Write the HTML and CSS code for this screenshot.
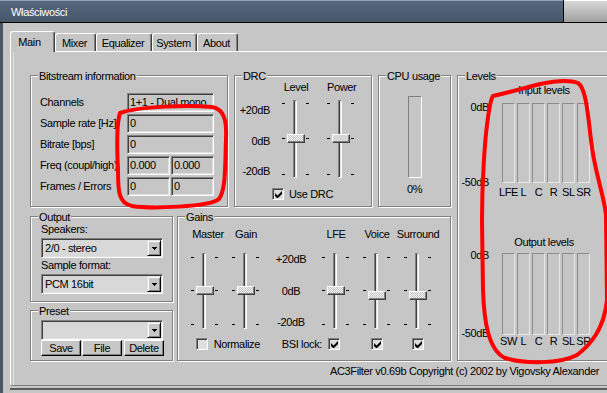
FILE: index.html
```html
<!DOCTYPE html>
<html lang="pl">

<head>
    <meta charset="utf-8">
    <link rel="stylesheet" href="styles.css">
</head>

<body>
    <div class="window">
        <div class="titlebar">
            <span class="title">Właściwości</span>
            <span class="title-side"></span>
        </div>

        <div class="client">
            <!-- Tabs -->
            <div class="tabs">
                <div class="tab tab-active" style="width:45px">Main</div>
                <div class="tab" style="width:41px">Mixer</div>
                <div class="tab" style="width:56px">Equalizer</div>
                <div class="tab" style="width:45px">System</div>
                <div class="tab" style="width:41px">About</div>
            </div>

            <div class="panel">
                <div class="panel-body">
                    <div class="left-col">
                        <div class="row-top">
                            <!-- Bitstream information -->
                            <div class="group bitstream">
                                <span class="group-title">Bitstream information</span>
                                <div class="info-grid">
                                    <span class="info-label">Channels</span>
                                    <div class="field">1+1 - Dual mono</div>
                                    <span class="info-label">Sample rate [Hz]</span>
                                    <div class="field">0</div>
                                    <span class="info-label">Bitrate [bps]</span>
                                    <div class="field">0</div>
                                    <span class="info-label">Freq (coupl/high)</span>
                                    <div class="field-pair">
                                        <div class="field">0.000</div>
                                        <div class="field">0.000</div>
                                    </div>
                                    <span class="info-label">Frames / Errors</span>
                                    <div class="field-pair">
                                        <div class="field">0</div>
                                        <div class="field">0</div>
                                    </div>
                                </div>
                            </div>

                            <!-- DRC -->
                            <div class="group drc">
                                <span class="group-title">DRC</span>
                                <div class="drc-body">
                                    <div class="scale drc-scale">
                                        <span>+20dB</span>
                                        <span>0dB</span>
                                        <span>-20dB</span>
                                    </div>
                                    <div class="slider-col">
                                        <span class="head">Level</span>
                                        <div class="slider slider-drc">
                                            <div class="track"></div>
                                            <div class="thumb thumb-dotted"></div>
                                        </div>
                                    </div>
                                    <div class="slider-col slider-col-power">
                                        <span class="head">Power</span>
                                        <div class="slider slider-drc">
                                            <div class="track"></div>
                                            <div class="thumb"></div>
                                        </div>
                                    </div>
                                </div>
                                <label class="check drc-check">
                                    <span class="box">
                                        <svg width="7" height="7" viewBox="0 0 7 7"><path d="M0 2L2.5 4.5L7 0V3L2.5 7.5L0 5Z"/></svg>
                                    </span>
                                    Use DRC
                                </label>
                            </div>

                            <!-- CPU usage -->
                            <div class="group cpu">
                                <span class="group-title">CPU usage</span>
                                <div class="cpu-meter"></div>
                                <div>0%</div>
                            </div>
                        </div>

                        <div class="row-bottom">
                            <div class="stack">
                                <!-- Output -->
                                <div class="group output">
                                    <span class="group-title">Output</span>
                                    <span class="field-label">Speakers:</span>
                                    <div class="combo">
                                        <span class="combo-value">2/0 - stereo</span>
                                        <span class="combo-btn">
                                            <svg width="5" height="3" viewBox="0 0 5 3" shape-rendering="crispEdges"><path d="M0 0h5v1H0zM1 1h3v1H1zM2 2h1v1H2z"/></svg>
                                        </span>
                                    </div>
                                    <span class="field-label">Sample format:</span>
                                    <div class="combo">
                                        <span class="combo-value">PCM 16bit</span>
                                        <span class="combo-btn">
                                            <svg width="5" height="3" viewBox="0 0 5 3" shape-rendering="crispEdges"><path d="M0 0h5v1H0zM1 1h3v1H1zM2 2h1v1H2z"/></svg>
                                        </span>
                                    </div>
                                </div>

                                <!-- Preset -->
                                <div class="group preset">
                                    <span class="group-title">Preset</span>
                                    <div class="combo">
                                        <span class="combo-value"></span>
                                        <span class="combo-btn">
                                            <svg width="5" height="3" viewBox="0 0 5 3" shape-rendering="crispEdges"><path d="M0 0h5v1H0zM1 1h3v1H1zM2 2h1v1H2z"/></svg>
                                        </span>
                                    </div>
                                    <div class="buttons">
                                        <button class="btn">Save</button>
                                        <button class="btn">File</button>
                                        <button class="btn btn-delete">Delete</button>
                                    </div>
                                </div>
                            </div>

                            <!-- Gains -->
                            <div class="group gains">
                                <span class="group-title">Gains</span>
                                <div class="gains-grid">
                                    <span class="head head-master">Master</span>
                                    <span class="head">Gain</span>
                                    <span class="head col-lfe">LFE</span>
                                    <span class="head">Voice</span>
                                    <span class="head">Surround</span>

                                    <div class="slider slider-gain">
                                        <div class="track"></div>
                                        <div class="thumb"></div>
                                    </div>
                                    <div class="slider slider-gain">
                                        <div class="track"></div>
                                        <div class="thumb thumb-dotted"></div>
                                    </div>
                                    <div class="scale gain-scale">
                                        <span>+20dB</span>
                                        <span>0dB</span>
                                        <span>-20dB</span>
                                    </div>
                                    <div class="slider slider-gain">
                                        <div class="track"></div>
                                        <div class="thumb thumb-dotted"></div>
                                    </div>
                                    <div class="slider slider-gain">
                                        <div class="track"></div>
                                        <div class="thumb thumb-dotted thumb-low"></div>
                                    </div>
                                    <div class="slider slider-gain">
                                        <div class="track"></div>
                                        <div class="thumb thumb-dotted thumb-low"></div>
                                    </div>

                                    <label class="check normalize">
                                        <span class="box"></span>
                                        Normalize
                                    </label>
                                    <label class="check bsi">
                                        BSI lock:
                                        <span class="box">
                                            <svg width="7" height="7" viewBox="0 0 7 7"><path d="M0 2L2.5 4.5L7 0V3L2.5 7.5L0 5Z"/></svg>
                                        </span>
                                    </label>
                                    <span class="cell-check col-voice">
                                        <span class="box">
                                            <svg width="7" height="7" viewBox="0 0 7 7"><path d="M0 2L2.5 4.5L7 0V3L2.5 7.5L0 5Z"/></svg>
                                        </span>
                                    </span>
                                    <span class="cell-check col-surround">
                                        <span class="box">
                                            <svg width="7" height="7" viewBox="0 0 7 7"><path d="M0 2L2.5 4.5L7 0V3L2.5 7.5L0 5Z"/></svg>
                                        </span>
                                    </span>
                                </div>
                            </div>
                        </div>
                    </div>

                    <!-- Levels -->
                    <div class="group levels">
                        <span class="group-title">Levels</span>

                        <div class="meter-block">
                            <div class="scale level-scale">
                                <span>0dB</span>
                                <span>-50dB</span>
                            </div>
                            <div class="meter-main">
                                <div class="meter-title">Input levels</div>
                                <div class="bars">
                                    <span class="bar"></span><span class="bar"></span><span class="bar"></span>
                                    <span class="bar"></span><span class="bar"></span><span class="bar"></span>
                                </div>
                                <div class="chans">
                                    <span>LFE</span><span>L</span><span>C</span><span>R</span><span>SL</span><span>SR</span>
                                </div>
                            </div>
                        </div>

                        <div class="meter-block meter-out">
                            <div class="scale level-scale">
                                <span>0dB</span>
                                <span>-50dB</span>
                            </div>
                            <div class="meter-main">
                                <div class="meter-title">Output levels</div>
                                <div class="bars">
                                    <span class="bar"></span><span class="bar"></span><span class="bar"></span>
                                    <span class="bar"></span><span class="bar"></span><span class="bar"></span>
                                </div>
                                <div class="chans">
                                    <span>SW</span><span>L</span><span>C</span><span>R</span><span>SL</span><span>SR</span>
                                </div>
                            </div>
                        </div>
                    </div>
                </div>

                <div class="footer">AC3Filter v0.69b Copyright (c) 2002 by Vigovsky Alexander</div>
            </div>
        </div>

        <!-- red pen marks drawn over the dialog -->
        <svg class="marks" width="607" height="393" viewBox="0 0 607 393">
            <path d="M120 113C140 106 190 105 212 107C224 109 227 120 226 140C225 165 226 190 219 199C210 207 150 209 132 206C118 203 118 190 118 170C117 150 116 125 120 113Z"/>
            <path d="M493 96C510 92 525 88 540 84C555 81 570 80 578 83C586 88 588 115 591 140C594 170 604 195 606 215L607 300C604 330 590 345 577 355C560 364 525 364 505 358C488 350 484 320 483 290L482 220C482 180 485 140 487 125C489 110 490 100 493 96Z"/>
        </svg>
    </div>
</body>

</html>
```

FILE: styles.css
```css
* {
    box-sizing: border-box;
}

html,
body {
    margin: 0;
    overflow: hidden;
}

body {
    background: #c6c6c6;
    color: #000;
    font: 11px/13px "Liberation Sans", Arial, sans-serif;
    letter-spacing: -0.35px;
}

.window {
    position: relative;
    width: 607px;
    height: 393px;
    overflow: hidden;
}

/* title bar */
.titlebar {
    display: flex;
    height: 23px;
    border-bottom: 1px solid #000;
    background: linear-gradient(#8fa2b6 0 1px, #55687d 1px, #46576a);
}

.title {
    flex: 1;
    padding-left: 11px;
    color: #fff;
    line-height: 24px;
}

.title-side {
    width: 44px;
    border-left: 1px solid #000;
    background: linear-gradient(#fff 0 1px, #d8d8d8 1px, #a0a0a0);
}

.client {
    height: 370px;
    padding: 8px 0 0 7px;
    border-left: 3px solid #4d5866;
}

/* tabs */
.tabs {
    position: relative;
    z-index: 1;
    display: flex;
    align-items: flex-end;
    height: 20px;
}

.tab {
    height: 18px;
    padding-right: 2px;
    border: 1px solid #fff;
    border-bottom: 0;
    border-right-color: #404040;
    border-radius: 3px 3px 0 0;
    box-shadow: inset -1px 0 #808080;
    background: #c6c6c6;
    text-align: center;
    line-height: 18px;
}

.tab-active {
    height: 21px;
    margin-bottom: -1px;
    padding-right: 6px;
    line-height: 20px;
}

.panel {
    width: 640px;
    height: 335px;
    padding: 23px 0 0 19px;
    border: 1px solid;
    border-color: #fff #404040 #808080 #fff;
    box-shadow: inset 2px 0 #c6c6c6, inset 3px 0 #e2e2e2, 0 2px #c6c6c6, 0 4px #5c5c5c;
}

.panel-body {
    display: flex;
    gap: 6px;
    height: 286px;
}

.left-col {
    flex: none;
    display: flex;
    flex-direction: column;
    gap: 9px;
    width: 421px;
}

.row-top {
    display: flex;
    gap: 6px;
    height: 132px;
}

.row-bottom {
    display: flex;
    gap: 4px;
    height: 145px;
}

.stack {
    display: flex;
    flex-direction: column;
    gap: 8px;
    width: 143px;
}

/* group boxes */
.group {
    position: relative;
    flex: none;
    border: 1px solid #808080;
    box-shadow: inset 1px 1px #fff, 1px 1px #fff;
}

.group-title {
    position: absolute;
    top: -6px;
    left: 7px;
    padding: 0 1px;
    background: #c6c6c6;
    white-space: nowrap;
}

/* sunken controls */
.field,
.combo,
.box {
    border: 1px solid;
    border-color: #808080 #fff #fff #808080;
    box-shadow: inset 1px 1px #404040, inset -1px -1px #dfdfdf;
}

.field {
    position: relative;
    height: 19px;
    padding-left: 2px;
    overflow: hidden;
    white-space: nowrap;
    line-height: 17px;
    background: #c6c6c6;
}

/* bitstream */
.bitstream {
    width: 198px;
    padding: 17px 0 0 9px;
}

.info-grid {
    display: grid;
    grid-template-columns: 78px 87px;
    grid-auto-rows: 19px;
    gap: 2px 9px;
    align-items: center;
}

/* long labels run under the fields, as in the dialog */
.info-label {
    white-space: nowrap;
}

.field-pair {
    display: flex;
    gap: 1px;
}

.field-pair .field {
    width: 43px;
}

/* sliders */
.slider {
    --t1: 4px;
    --t2: 37px;
    --t3: 71px;
    position: relative;
    width: 28px;
    height: 76px;
    background:
        linear-gradient(#000 0 0) 0 var(--t1) / 3px 1px no-repeat,
        linear-gradient(#000 0 0) 24px var(--t1) / 3px 1px no-repeat,
        linear-gradient(#000 0 0) 0 var(--t2) / 3px 1px no-repeat,
        linear-gradient(#000 0 0) 24px var(--t2) / 3px 1px no-repeat,
        linear-gradient(#000 0 0) 0 var(--t3) / 3px 1px no-repeat,
        linear-gradient(#000 0 0) 24px var(--t3) / 3px 1px no-repeat;
}

.slider-drc {
    --t1: 3px;
    --t2: 38px;
    --t3: 74px;
    height: 78px;
}

.track {
    width: 4px;
    height: 100%;
    margin-left: 11px;
    border: 1px solid;
    border-color: #808080 #fff #fff #808080;
    background: linear-gradient(to right, #404040 50%, #dfdfdf 50%);
}

.thumb {
    position: absolute;
    top: 33px;
    left: 5px;
    width: 18px;
    height: 9px;
    border: 1px solid;
    border-color: #fff #404040 #404040 #fff;
    box-shadow: inset -1px -1px #808080;
    background: #d6d6d6;
}

.slider-drc .thumb {
    top: 34px;
}

.thumb-dotted {
    background: repeating-conic-gradient(#f2f2f2 0 25%, #c6c6c6 0 50%) 0 0 / 2px 2px;
}

.thumb-low {
    top: 38px;
}

.head {
    display: flex;
    justify-content: center;
    white-space: nowrap;
}

.scale {
    display: flex;
    flex-direction: column;
    justify-content: space-between;
}

/* DRC */
.drc {
    width: 138px;
    padding-top: 5px;
}

.drc-body {
    display: flex;
}

.drc-scale {
    width: 36px;
    height: 78px;
    margin: 19px 11px 0 0;
    padding: 4px 1px 0 0;
    align-items: flex-end;
}

.slider-col {
    display: flex;
    flex-direction: column;
    gap: 6px;
}

.slider-col-power {
    margin-left: 17px;
}

/* checkboxes */
.check {
    display: flex;
    align-items: center;
    gap: 5px;
    line-height: 12px;
    white-space: nowrap;
}

.box {
    display: flex;
    align-items: center;
    justify-content: center;
    width: 12px;
    height: 12px;
    background: #dedede;
}

.drc-check {
    margin: 10px 0 0 37px;
}

/* CPU */
.cpu {
    width: 73px;
    padding-top: 20px;
    text-align: center;
}

.cpu-meter {
    width: 14px;
    height: 82px;
    margin: 0 auto 5px;
    border: 1px solid;
    border-color: #808080 #fff #fff #808080;
}

/* output + preset */
.output {
    height: 86px;
    padding: 6px 0 0 10px;
}

.field-label {
    display: block;
}

.combo {
    display: flex;
    width: 122px;
    height: 20px;
    padding: 1px;
    background: #d8d8d8;
}

.output .combo {
    margin: 2px 0 1px;
}

.combo-value {
    flex: 1;
    padding-left: 2px;
    line-height: 16px;
    overflow: hidden;
    white-space: nowrap;
}

.combo-btn {
    display: flex;
    align-items: center;
    justify-content: center;
    width: 14px;
    height: 16px;
    border: 1px solid;
    border-color: #dfdfdf #000 #000 #dfdfdf;
    box-shadow: inset 1px 1px #fff, inset -1px -1px #808080;
    background: #c6c6c6;
}

.preset {
    height: 51px;
    padding: 9px 0 0 10px;
}

.buttons {
    display: flex;
    gap: 1px;
}

.btn {
    width: 40px;
    height: 16px;
    padding: 0;
    border: 1px solid;
    border-color: #fff #000 #000 #fff;
    box-shadow: inset -1px -1px #808080;
    background: #c6c6c6;
    color: #000;
    font: inherit;
    letter-spacing: inherit;
    line-height: 14px;
}

.btn-delete {
    margin-left: 1px;
}

/* gains */
.gains {
    width: 274px;
    padding: 11px 0 0 13px;
}

.gains-grid {
    display: grid;
    grid-template-columns: 28px 28px 36px 28px 28px 28px;
    grid-template-rows: 13px 88px 21px;
    column-gap: 13px;
}

.head-master {
    padding-left: 6px;
}

.col-lfe {
    grid-column: 4;
}

.gains-grid .slider {
    align-self: end;
}

.gain-scale {
    align-self: end;
    align-items: center;
    height: 76px;
}

.normalize {
    grid-column: 1 / 3;
    align-self: end;
    margin-left: 5px;
    gap: 6px;
}

.bsi {
    grid-column: 3 / 5;
    align-self: end;
    justify-content: flex-end;
    padding-right: 10px;
    gap: 6px;
}

.cell-check {
    display: flex;
    justify-content: center;
    align-self: end;
}

.col-voice {
    grid-column: 5;
}

.col-surround {
    grid-column: 6;
}

/* levels */
.levels {
    width: 170px;
    height: 286px;
    padding-top: 8px;
}

.meter-block {
    display: flex;
}

.level-scale {
    width: 31px;
    height: 80px;
    margin: 19px 13px 0 0;
    align-items: flex-end;
}

.level-scale span:first-child {
    margin-top: -2px;
}

.level-scale span:last-child {
    margin-bottom: -6px;
}

.meter-title {
    padding-right: 4px;
    margin-bottom: 6px;
    text-align: center;
    white-space: nowrap;
}

.bars,
.chans {
    display: flex;
    gap: 2px;
}

.bars {
    height: 80px;
}

.bar {
    width: 13px;
    border: 1px solid;
    border-color: #8c8c8c #e8e8e8 #e8e8e8 #8c8c8c;
}

.chans {
    margin-top: 3px;
}

.chans span {
    display: flex;
    justify-content: center;
    width: 13px;
}

.meter-out {
    margin-top: 37px;
}

.meter-out .meter-title {
    margin-bottom: 4px;
}

.meter-out .level-scale {
    height: 82px;
    margin-top: 17px;
}

.meter-out .level-scale span:first-child {
    margin-top: -4px;
}

.meter-out .level-scale span:last-child {
    margin-bottom: -5px;
}

.meter-out .bars {
    height: 82px;
}

.meter-out .chans {
    margin-top: 0;
}

.footer {
    margin-top: 4px;
    padding-right: 50px;
    text-align: right;
    white-space: nowrap;
}

/* red pen marks */
.marks {
    position: absolute;
    top: 0;
    left: 0;
    pointer-events: none;
    fill: none;
    stroke: #f00;
    stroke-width: 4;
    stroke-linejoin: round;
}
```
